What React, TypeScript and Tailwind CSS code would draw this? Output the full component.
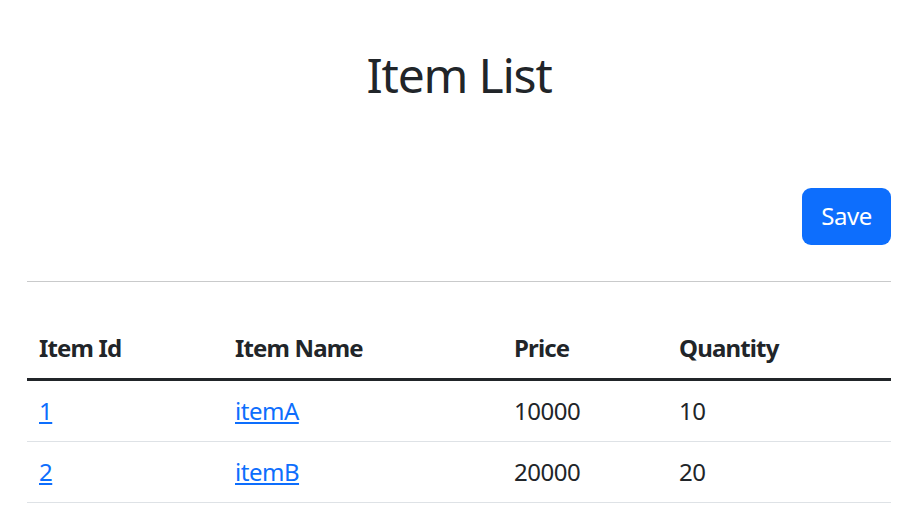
import React from 'react';

interface Item {
  id: number;
  name: string;
  price: number;
  quantity: number;
}

const items: Item[] = [
  { id: 1, name: 'itemA', price: 10000, quantity: 10 },
  { id: 2, name: 'itemB', price: 20000, quantity: 20 },
];

export default function App() {
  return (
    <div
      className="min-h-screen bg-white text-[#212529] tracking-[-0.03em]"
      style={{ fontFamily: '"Noto Sans", "Noto Sans CJK KR", sans-serif' }}
    >
      <div className="ml-[27px] w-[864px]">
        {/* Title */}
        <div className="pt-[46px] text-center">
          <h2 className="text-[48px] font-normal leading-[57.6px] tracking-[-0.025em]">Item List</h2>
        </div>

        {/* Actions */}
        <div className="mt-[84px] flex justify-end">
          <button
            type="button"
            className="h-[57px] w-[89px] rounded-[9px] bg-[#0d6efd] text-[24px] leading-[36px] text-white"
          >
            Save
          </button>
        </div>

        <div className="mt-[36px] h-[1.5px] bg-[#c9cacb]" />

        {/* Table */}
        <table className="mt-[36px] w-full border-collapse text-left text-[24px] leading-[36px]">
          <thead>
            <tr className="border-b-[3px] border-[#212529]">
              <th className="w-[196px] px-[12px] py-[12px] font-bold tracking-[-0.035em]">Item Id</th>
              <th className="w-[279px] px-[12px] py-[12px] font-bold tracking-[-0.035em]">Item Name</th>
              <th className="w-[165px] px-[12px] py-[12px] font-bold tracking-[-0.035em]">Price</th>
              <th className="px-[12px] py-[12px] font-bold tracking-[-0.035em]">Quantity</th>
            </tr>
          </thead>
          <tbody>
            {items.map((item) => (
              <tr key={item.id} className="border-b-[1.5px] border-[#dee2e6]">
                <td className="px-[12px] py-[12px]">
                  <a href="#" className="text-[#0d6efd] underline">
                    {item.id}
                  </a>
                </td>
                <td className="px-[12px] py-[12px]">
                  <a href="#" className="text-[#0d6efd] underline">
                    {item.name}
                  </a>
                </td>
                <td className="px-[12px] py-[12px]">{item.price}</td>
                <td className="px-[12px] py-[12px]">{item.quantity}</td>
              </tr>
            ))}
          </tbody>
        </table>
      </div>
    </div>
  );
}
